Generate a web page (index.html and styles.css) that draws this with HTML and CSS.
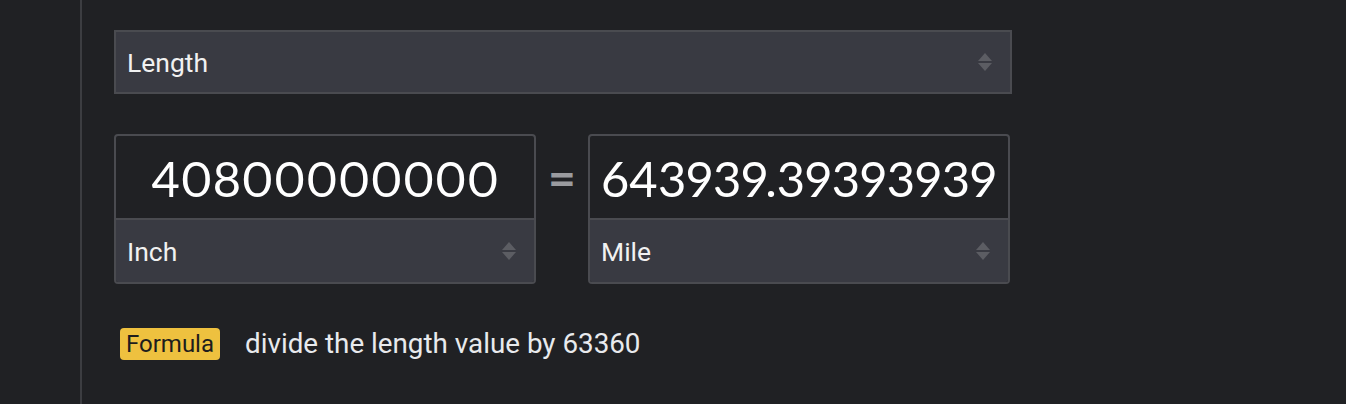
FILE: index.html
```html
<!DOCTYPE html>
<html lang="en">
<head>
  <meta charset="UTF-8" />
  <meta name="viewport" content="width=device-width, initial-scale=1.0"/>
  <title>Unit Converter</title>
  <link rel="stylesheet" href="styles.css">
</head>
<body>

  <div class="panel">
    <div class="select-box type-select">
      <span>Length</span>
      <span class="arrows"></span>
    </div>

    <div class="convert-row">
      <div class="field">
        <div class="value">40800000000</div>
        <div class="select-box unit">
          <span>Inch</span>
          <span class="arrows"></span>
        </div>
      </div>
      <div class="equals">=</div>
      <div class="field">
        <div class="value">643939.39393939</div>
        <div class="select-box unit">
          <span>Mile</span>
          <span class="arrows"></span>
        </div>
      </div>
    </div>

    <div class="formula">
      <span class="badge">Formula</span>
      <span class="formula-text">divide the length value by 63360</span>
    </div>
  </div>

</body>
</html>
```

FILE: styles.css
```css
* {
  box-sizing: border-box;
  margin: 0;
  padding: 0;
  font-family: Roboto, 'Liberation Sans', sans-serif;
}
body {
  background-color: #202124;
  color: #e8eaed;
  height: 404px;
  overflow: hidden;
}
.panel {
  margin-left: 80px;
  height: 100%;
  border-left: 2px solid #3c3d41;
  padding: 30px 0 0 32px;
}
.select-box {
  display: flex;
  justify-content: space-between;
  align-items: center;
  background-color: #393a42;
  color: #f1f1f1;
  font-size: 26.5px;
  padding: 0 18px 0 11px;
  height: 64px;
}
.type-select {
  width: 898px;
  border: 2px solid #4a4b50;
}
.arrows {
  display: flex;
  flex-direction: column;
  gap: 2px;
}
.arrows::before, .arrows::after {
  content: "";
  width: 0;
  height: 0;
  border-left: 7px solid transparent;
  border-right: 7px solid transparent;
}
.arrows::before {
  border-bottom: 8px solid #5c5d63;
}
.arrows::after {
  border-top: 8px solid #5c5d63;
}
.convert-row {
  display: flex;
  align-items: flex-start;
  margin-top: 40px;
}
.field {
  width: 422px;
  border: 2px solid #4a4b50;
  border-radius: 4px;
  overflow: hidden;
}
.value {
  height: 84px;
  padding: 0 11px;
  text-align: center;
  line-height: 84px;
  font-family: Lato, sans-serif;
  font-size: 49px;
  font-variant-numeric: proportional-nums;
  color: #ffffff;
  white-space: nowrap;
  overflow: hidden;
  border-bottom: 2px solid #4a4b50;
}
.unit {
  height: 62px;
}
.equals {
  width: 52px;
  height: 86px;
  display: flex;
  align-items: center;
  justify-content: center;
  font-family: Lato, sans-serif;
  font-size: 48px;
  font-weight: bold;
  color: #9a9b9f;
}
.formula {
  display: flex;
  align-items: center;
  margin-top: 43px;
  margin-left: 6px;
}
.badge {
  background-color: #eec13f;
  color: #1d1d1d;
  font-size: 24px;
  padding: 2px 6px;
  border-radius: 4px;
  line-height: 28px;
}
.formula-text {
  margin-left: 25px;
  font-size: 27.8px;
  color: #e8eaed;
}
```
